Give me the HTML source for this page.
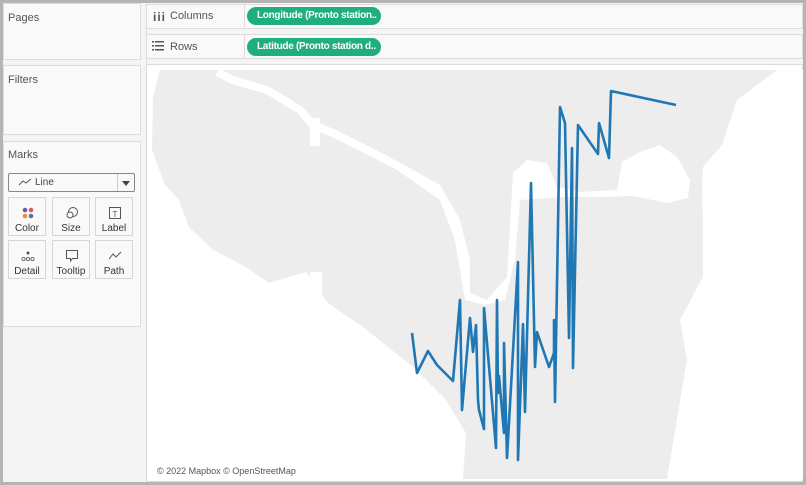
<!DOCTYPE html>
<html><head><style>
*{margin:0;padding:0;box-sizing:border-box}
body{width:806px;height:485px;background:#b4b4b4;position:relative;overflow:hidden;font-family:"Liberation Sans",sans-serif;}
.bg{position:absolute;left:3px;top:3px;width:800px;height:479px;background:#f4f4f4}
.p{position:absolute;background:#f9f9f9;border:1px solid #dcdcdc}
.t{position:absolute;font-size:11px;color:#555;white-space:nowrap}
.pill{position:absolute;background:#1fae7c;color:#fff;font-size:10px;font-weight:bold;border-radius:9px;height:18px;line-height:18px;padding-left:10px;white-space:nowrap;overflow:hidden;letter-spacing:-0.3px}
.btn{position:absolute;width:38px;height:39px;border:1px solid #d6d6d6;background:#f9f9f9;font-size:10px;color:#333;text-align:center}
.btn span{position:absolute;left:0;right:0;top:25px}
.btn svg{position:absolute;left:12px;top:8px}
</style></head><body>
<div class="bg"></div>
<div class="p" style="left:3px;top:3px;width:138px;height:57px"></div>
<div class="t" style="left:8px;top:12px">Pages</div>
<div class="p" style="left:3px;top:65px;width:138px;height:70px"></div>
<div class="t" style="left:8px;top:74px">Filters</div>
<div class="p" style="left:3px;top:141px;width:138px;height:186px"></div>
<div class="t" style="left:8px;top:149px">Marks</div>
<div style="position:absolute;left:8px;top:173px;width:127px;height:19px;border:1px solid #888;background:#f9f9f9;border-radius:2px"></div>
<div style="position:absolute;left:117px;top:174px;width:1px;height:17px;background:#ccc"></div>
<div style="position:absolute;left:122px;top:181px;border-left:4px solid transparent;border-right:4px solid transparent;border-top:5px solid #444"></div>
<svg style="position:absolute;left:18px;top:177px" width="14" height="10"><polyline points="1,8 5,4 8,6 13,2" fill="none" stroke="#555" stroke-width="1"/></svg>
<div class="t" style="left:35px;top:177px;font-size:10px;color:#444">Line</div>
<div class="btn" style="left:8px;top:197px"><svg width="14" height="14"><circle cx="4" cy="4" r="2.3" fill="#6a5ea8"/><circle cx="10" cy="4" r="2.3" fill="#e15759"/><circle cx="4" cy="10" r="2.3" fill="#f28e2b"/><circle cx="10" cy="10" r="2.3" fill="#4e79a7"/></svg><span>Color</span></div>
<div class="btn" style="left:52px;top:197px"><svg width="14" height="14"><circle cx="8" cy="6" r="4.5" fill="none" stroke="#555"/><circle cx="5" cy="9" r="3" fill="#f9f9f9" stroke="#555"/></svg><span>Size</span></div>
<div class="btn" style="left:95px;top:197px"><svg width="14" height="14"><rect x="1.5" y="1.5" width="11" height="11" fill="none" stroke="#555"/><text x="7" y="11" font-size="8" text-anchor="middle" fill="#555" font-family="Liberation Sans">T</text></svg><span>Label</span></div>
<div class="btn" style="left:8px;top:240px"><svg width="14" height="14"><circle cx="7" cy="4" r="1.5" fill="#555"/><circle cx="2.5" cy="10" r="1.6" fill="none" stroke="#555" stroke-width=".8"/><circle cx="7" cy="10" r="1.6" fill="none" stroke="#555" stroke-width=".8"/><circle cx="11.5" cy="10" r="1.6" fill="none" stroke="#555" stroke-width=".8"/></svg><span>Detail</span></div>
<div class="btn" style="left:52px;top:240px"><svg width="14" height="14"><path d="M1.5 1.5h11v8h-5l-2 2.5v-2.5h-4z" fill="none" stroke="#555"/></svg><span>Tooltip</span></div>
<div class="btn" style="left:95px;top:240px"><svg width="14" height="14"><polyline points="1,10 5,5 8,8 13,3" fill="none" stroke="#555"/></svg><span>Path</span></div>
<div style="position:absolute;left:146px;top:3px;width:1px;height:479px;background:#e0e0e0"></div>
<div class="p" style="left:146px;top:4px;width:657px;height:25px"></div>
<div class="p" style="left:146px;top:4px;width:99px;height:25px"></div>
<div class="t" style="left:153px;top:10px;font-weight:bold;font-size:12px;color:#555;letter-spacing:1px">iii</div>
<div class="t" style="left:170px;top:10px">Columns</div>
<div class="pill" style="left:247px;top:7px;width:134px">Longitude (Pronto station..</div>
<div class="p" style="left:146px;top:34px;width:657px;height:25px"></div>
<div class="p" style="left:146px;top:34px;width:99px;height:25px"></div>
<svg style="position:absolute;left:152px;top:41px" width="12" height="10"><g fill="#555"><rect x="0" y="0" width="2" height="1.5"/><rect x="3" y="0" width="9" height="1.5"/><rect x="0" y="4" width="2" height="1.5"/><rect x="3" y="4" width="9" height="1.5"/><rect x="0" y="8" width="2" height="1.5"/><rect x="3" y="8" width="9" height="1.5"/></g></svg>
<div class="t" style="left:170px;top:41px">Rows</div>
<div class="pill" style="left:247px;top:38px;width:134px">Latitude (Pronto station d..</div>
<div class="p" style="left:146px;top:64px;width:657px;height:418px;background:#fff"></div>
<svg style="position:absolute;left:0;top:0" width="806" height="485">
<defs><clipPath id="c"><rect x="152" y="70" width="651" height="409"/></clipPath></defs>
<g clip-path="url(#c)">
<rect x="152" y="70" width="651" height="409" fill="#fff"/>
<polygon fill="#ededed" points="160,70 777,70 737,100 722,145 703,167 702,187 703,220 703,277 680,320 687,360 667,479 463,479 466,433 446,400 413,367 363,327 328,303 306,272 269,283 246,267 213,250 189,227 179,200 165,185 152,150 153,97"/>
<polyline fill="none" stroke="#fff" stroke-width="8" stroke-linejoin="round" points="217,72 233,80 267,90 300,110 313,125 333,133 367,150 400,167 440,190"/>
<rect x="310" y="118" width="10" height="28" fill="#fff"/>
<polygon fill="#fff" points="400,163 440,185 460,220 470,260 470,293 487,300 507,277 510,227 513,173 527,160 547,163 557,187 580,192 617,190 622,162 640,152 660,145 677,157 690,180 688,198 667,203 633,196 600,197 560,197 520,200 515,260 505,300 485,305 465,300 455,240 440,200 400,172"/>
<rect x="310" y="272" width="12" height="30" fill="#fff"/>
<path d="M412,333 L417,373 L428,351 L437,365 L453,381 L460,300 L462,410 L470,318 L473,352 L476,325 L478,400 L479,410 L484,429 L484,308 L496,448 L497,300 L498,393 L499,376 L504,433 L504,343 L507,458 L518,262 L518,460 L523,324 L525,412 L531,183 L535,367 L537,332 L549,367 L554,353 L554,320 L555,402 L560,107 L565,123 L569,338 L572,148 L573,368 L578,125 L598,154 L599,123 L609,158 L611,91 L676,105" fill="none" stroke="#1f77b4" stroke-width="2.6" stroke-linejoin="round"/>
</g>
</svg>
<div class="t" style="left:157px;top:466px;font-size:9px;color:#555">© 2022 Mapbox © OpenStreetMap</div>
</body></html>
